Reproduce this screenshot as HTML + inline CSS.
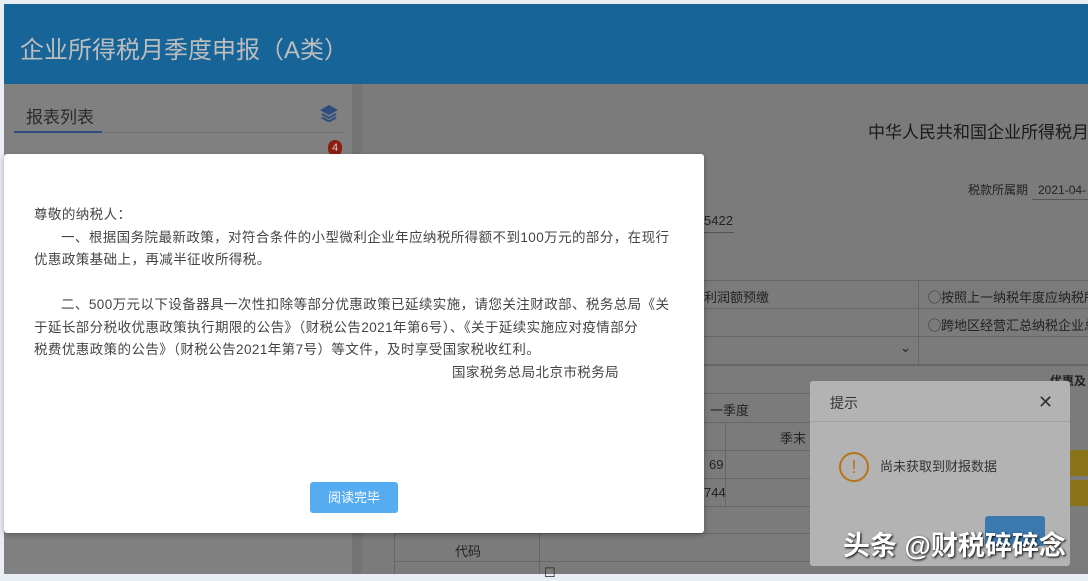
<!DOCTYPE html>
<html><head><meta charset="utf-8"><style>
*{margin:0;padding:0;box-sizing:border-box}
body{width:1088px;height:574px;overflow:hidden;position:relative;background:#e9eef4;font-family:"Liberation Sans","Noto Sans CJK SC",sans-serif;color:#333}
.a{position:absolute}
.t{font-size:13px;white-space:nowrap}
</style></head><body>
<div class="a" style="left:4px;top:4px;width:1084px;height:80px;background:#176598"></div>
<div class="a t" style="left:20px;top:30px;font-size:24px;color:#bdbdbd">企业所得税月季度申报（A类）</div>
<div class="a" style="left:4px;top:84px;width:348px;height:490px;background:#808080"></div>
<div class="a" style="left:352px;top:84px;width:10px;height:490px;background:#747474"></div>
<div class="a" style="left:362px;top:84px;width:726px;height:490px;background:#7b7b7b"></div>
<div class="a t" style="left:26px;top:103px;font-size:17px;color:#2a2a2a">报表列表</div>
<div class="a" style="left:14px;top:131px;width:88px;height:2px;background:#2d4d80"></div>
<div class="a" style="left:102px;top:132px;width:242px;height:1px;background:#6e6e6e"></div>
<svg class="a" style="left:320px;top:104px" width="18" height="18" viewBox="0 0 18 18" fill="none" stroke="#2d4d80" stroke-width="2"><path d="M9 2l7 4-7 4-7-4z" fill="#2d4d80"/><path d="M2 10l7 4 7-4"/><path d="M2 13.5l7 4 7-4"/></svg>
<div class="a" style="left:328px;top:140px;width:14px;height:16px;border-radius:7px;background:#8b1e10;color:#ccc;font-size:11px;text-align:center;line-height:16px">4</div>
<div class="a t" style="left:868px;top:118px;font-size:17px;color:#1a1a1a">中华人民共和国企业所得税月</div>
<div class="a t" style="left:968px;top:181px;font-size:12px;color:#222">税款所属期&nbsp;&nbsp;&nbsp;2021-04-</div>
<div class="a" style="left:1032px;top:199px;width:56px;height:1px;background:#555"></div>
<div class="a t" style="left:704px;top:213px;color:#222">5422</div>
<div class="a" style="left:704px;top:232px;width:30px;height:1px;background:#555"></div>
<div class="a" style="left:704px;top:280px;width:384px;height:1px;background:#666"></div>
<div class="a" style="left:704px;top:308px;width:384px;height:1px;background:#666"></div>
<div class="a" style="left:704px;top:336px;width:384px;height:1px;background:#666"></div>
<div class="a" style="left:704px;top:364px;width:384px;height:2px;background:#666"></div>
<div class="a" style="left:918px;top:280px;width:1px;height:84px;background:#666"></div>
<div class="a t" style="left:704px;top:287px;color:#222">利润额预缴</div>
<div class="a t" style="left:928px;top:287px;color:#222">◯按照上一纳税年度应纳税所得</div>
<div class="a t" style="left:928px;top:315px;color:#222">◯跨地区经营汇总纳税企业总机</div>
<div class="a t" style="left:900px;top:340px;color:#222">⌄</div>
<div class="a" style="left:704px;top:393px;width:106px;height:1px;background:#666"></div>
<div class="a t" style="left:710px;top:400px;color:#222">一季度</div>
<div class="a" style="left:704px;top:422px;width:106px;height:1px;background:#666"></div>
<div class="a" style="left:725px;top:422px;width:1px;height:84px;background:#666"></div>
<div class="a t" style="left:780px;top:428px;color:#222">季末</div>
<div class="a" style="left:704px;top:450px;width:106px;height:1px;background:#666"></div>
<div class="a" style="left:704px;top:478px;width:106px;height:1px;background:#666"></div>
<div class="a" style="left:704px;top:506px;width:106px;height:1px;background:#666"></div>
<div class="a t" style="left:709px;top:457px;color:#222">69</div>
<div class="a t" style="left:704px;top:485px;color:#222">744</div>
<div class="a t" style="left:1050px;top:372px;color:#222;font-weight:bold;font-size:12px">优惠及</div>
<div class="a" style="left:1070px;top:450px;width:18px;height:26px;background:#8a7419"></div>
<div class="a" style="left:1070px;top:480px;width:18px;height:26px;background:#8a7419"></div>
<div class="a" style="left:394px;top:533px;width:416px;height:1px;background:#666"></div>
<div class="a" style="left:394px;top:561px;width:416px;height:1px;background:#666"></div>
<div class="a" style="left:394px;top:533px;width:1px;height:41px;background:#666"></div>
<div class="a" style="left:539px;top:533px;width:1px;height:41px;background:#666"></div>
<div class="a t" style="left:455px;top:541px;color:#222">代码</div>
<div class="a t" style="left:544px;top:565px;color:#222">☐</div>

<div class="a" style="left:4px;top:154px;width:700px;height:379px;background:#fff;border-radius:3px;box-shadow:0 2px 6px rgba(0,0,0,.3)"></div>
<div class="a" style="left:34px;top:204px;width:665px;font-size:13.5px;line-height:22.5px;color:#444;white-space:nowrap;letter-spacing:0.42px">
<div>尊敬的纳税人：</div>
<div style="text-indent:27px">一、根据国务院最新政策，对符合条件的小型微利企业年应纳税所得额不到100万元的部分，在现行<br>优惠政策基础上，再减半征收所得税。</div>
<div>&nbsp;</div>
<div style="text-indent:27px">二、500万元以下设备器具一次性扣除等部分优惠政策已延续实施，请您关注财政部、税务总局《关<br>于延长部分税收优惠政策执行期限的公告》（财税公告2021年第6号）、《关于延续实施应对疫情部分<br>税费优惠政策的公告》（财税公告2021年第7号）等文件，及时享受国家税收红利。</div>
<div style="padding-left:418px">国家税务总局北京市税务局</div>
</div>
<div class="a" style="left:310px;top:482px;width:88px;height:31px;background:#55acf0;border-radius:3px;color:#fff;font-size:13px;text-align:center;line-height:31px">阅读完毕</div>

<div class="a" style="left:810px;top:381px;width:260px;height:185px;background:#b3b3b3;border-radius:3px"></div>
<div class="a" style="left:810px;top:421px;width:260px;height:1px;background:#a0a0a0"></div>
<div class="a t" style="left:830px;top:393px;color:#333;font-size:14px">提示</div>
<div class="a t" style="left:1038px;top:392px;color:#333;font-size:18px">✕</div>
<div class="a" style="left:839px;top:452px;width:30px;height:30px;border:2px solid #b8731b;border-radius:50%;color:#b8731b;text-align:center;line-height:26px;font-size:18px">!</div>
<div class="a t" style="left:880px;top:456px;color:#333;font-size:13px">尚未获取到财报数据</div>
<div class="a" style="left:985px;top:516px;width:60px;height:30px;background:#3a78ad;border-radius:3px"></div>
<div class="a t" style="left:843px;top:524px;font-size:27px;color:#fff;font-weight:bold;text-shadow:1px 1px 2px #000">头条 @财税碎碎念</div>
</body></html>
